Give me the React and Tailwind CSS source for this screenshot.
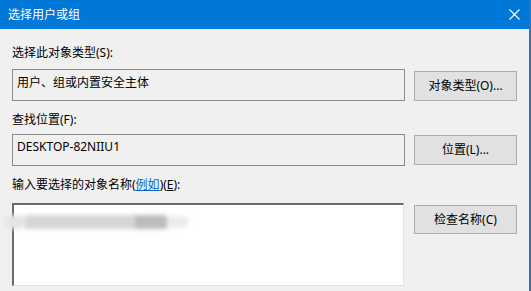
export default function App() {
  const font = { fontFamily: '"Noto Sans", "Noto Sans CJK SC", sans-serif' };

  return (
    <div
      className="w-[531px] h-[291px] overflow-hidden bg-[#f0f0f0] text-[12px] text-black flex flex-col border-r-2 border-[#3a72ad]"
      style={font}
    >
      <div className="h-[29px] shrink-0 bg-[#0078d7] flex items-center justify-between pl-[8px] pr-[9px]">
        <span className="text-white text-[12px] leading-none">选择用户或组</span>
        <svg width="11" height="11" viewBox="0 0 11 11">
          <path d="M0.5 0.5 L10.5 10.5 M10.5 0.5 L0.5 10.5" stroke="#ffffff" strokeWidth="1.1" fill="none" />
        </svg>
      </div>

      <div className="flex flex-col pl-[12px]">
        <div className="mt-[14px] leading-[20px] h-[20px]">选择此对象类型(S):</div>
        <div className="mt-[6px] flex items-start gap-[9px]">
          <div className="w-[393px] h-[32px] border border-[#8c8c8c] bg-[#f0f0f0] px-[4px] pt-[3px] leading-[20px]">
            用户、组或内置安全主体
          </div>
          <button className="mt-[2px] w-[103px] h-[30px] bg-[#e1e1e1] border border-[#adadad] leading-none">
            对象类型(O)...
          </button>
        </div>

        <div className="mt-[9px] leading-[20px] h-[20px]">查找位置(F):</div>
        <div className="mt-[4px] flex items-start gap-[9px]">
          <div className="w-[393px] h-[32px] border border-[#8c8c8c] bg-[#f0f0f0] px-[4px] pt-[2px] leading-[20px]">
            DESKTOP-82NIIU1
          </div>
          <button className="mt-[1px] w-[103px] h-[30px] bg-[#e1e1e1] border border-[#adadad] leading-none">
            位置(L)...
          </button>
        </div>

        <div className="mt-[9px] leading-[20px] h-[20px]">
          输入要选择的对象名称(<span className="text-[#0066cc] underline">例如</span>)(<span className="underline">E</span>):
        </div>
        <div className="mt-[8px] flex items-start gap-[10px]">
          <div className="w-[392px] h-[83px] bg-white border-t-2 border-l-2 border-[#6b6b6b] border-r border-b border-r-[#e3e3e3] border-b-[#e3e3e3]">
            <div className="-ml-[9px] mt-[9px] h-[16px] flex items-center blur-[2px]">
              <div className="w-[20px] h-[14px] rounded-full bg-[#e2e4e6]" />
              <div className="w-[110px] h-[14px] bg-[#d6d6d6]" />
              <div className="w-[32px] h-[14px] bg-[#bcbcbc]" />
              <div className="w-[22px] h-[12px] rounded-full bg-[#ececec]" />
            </div>
          </div>
          <button className="mt-[2px] w-[103px] h-[29px] bg-[#e1e1e1] border border-[#adadad] leading-none">
            检查名称(C)
          </button>
        </div>
      </div>
    </div>
  );
}
